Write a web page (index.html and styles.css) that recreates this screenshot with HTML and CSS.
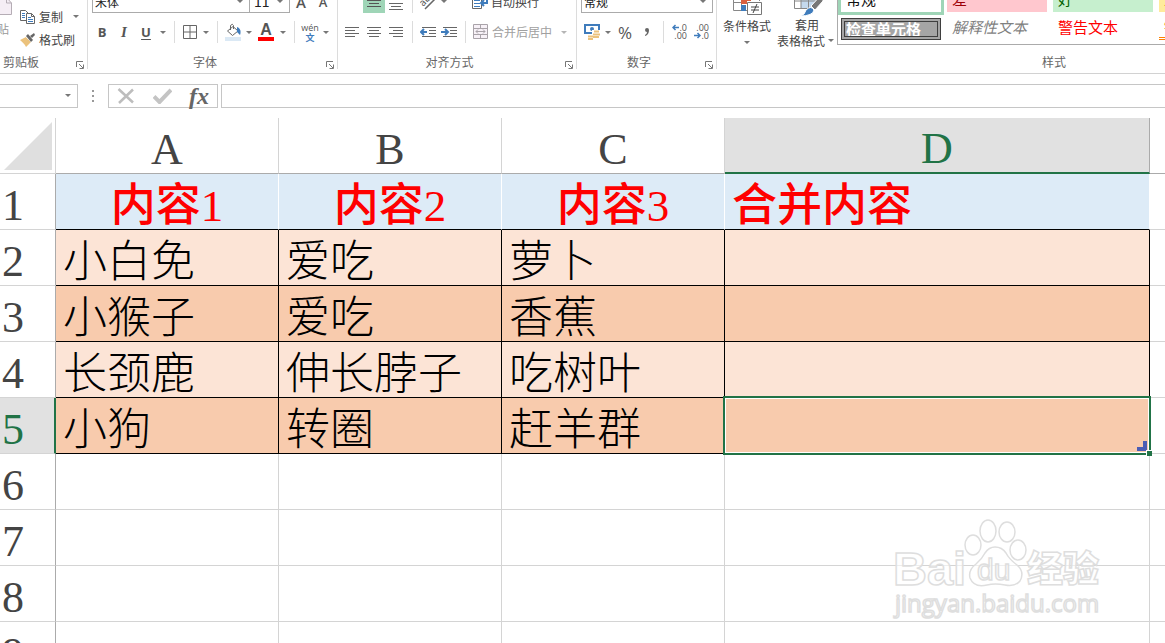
FILE: index.html
```html
<!DOCTYPE html>
<html lang="zh-CN">
<head>
<meta charset="utf-8">
<title>工作表</title>
<link rel="stylesheet" href="styles.css">
</head>
<body>
<div class="app">
<header class="ribbon">
  <section class="group clipboard">
    <div class="clip-body">
      <button class="paste"><svg width="12" height="18" viewBox="0 0 12 18"><path d="M-4 0.500H6.500L11.500 6V17.500H-4z" fill="#f5eef5" stroke="#b5adb5"/><path d="M6.500 0.500V6H11.500" fill="none" stroke="#b5adb5"/></svg><span>粘贴</span></button>
      <div class="clip-list">
        <button class="text-btn"><svg width="16" height="16" viewBox="0 0 16 16"><path d="M.5 1.500H5.500L8.500 4.500V11.500H.5z" fill="#fff" stroke="#666"/><path d="M2 4.500h3M2 6.500h3M2 8.500h3" stroke="#3f7cbc"/><path d="M6.500 4.500H11.500L14.500 7.500V14.500H6.500z" fill="#fff" stroke="#666"/><path d="M11.500 4.500V7.500H14.500" fill="none" stroke="#666"/><path d="M8 8.500h3M8 10.500h5M8 12.500h5" stroke="#3f7cbc"/></svg><span>复制</span><i class="arr gap-left"></i></button>
        <button class="text-btn"><svg width="16" height="16" viewBox="0 0 16 16"><path d="M0 8L6 5L11 10L6 15C5 12 2 10 0 8z" fill="#ebc27c"/><path d="M7 4L12 9" stroke="#fff" stroke-width="3"/><path d="M6 4L8 2L13 8L11 10z" fill="#666"/><path d="M10 4L14 1L15 3L12 6z" fill="#666"/></svg><span>格式刷</span></button>
      </div>
    </div>
    <div class="label-row"><span>剪贴板</span><button class="launch" aria-label="剪贴板设置"><svg width="8" height="8" viewBox="0 0 8 8"><path d="M.5 6V.5H7M3 3l4 4M7.500 3.500v4h-4" fill="none" stroke="#777"/></svg></button></div>
  </section>

  <section class="group font-group">
    <div class="row row-top">
      <span class="pick font-name"><select aria-label="字体"><option>宋体</option></select></span><span class="pick font-size"><select aria-label="字号"><option>11</option></select></span>
      <button class="btn wide big-a" aria-label="增大字号">A</button><button class="btn wide small-a" aria-label="减小字号">A</button>
    </div>
    <div class="row">
      <button class="btn wide b">B</button><button class="btn wide i">I</button><button class="btn wide u">U</button><i class="arr"></i><i class="sep"></i>
      <button class="btn" aria-label="边框"><svg width="14" height="14" viewBox="0 0 14 14"><path d="M.5.5h13v13H.5zM7 .5v13M.5 7h13" fill="none" stroke="#666"/></svg></button><i class="arr"></i><i class="sep"></i>
      <button class="btn" aria-label="填充颜色"><svg width="16" height="18" viewBox="0 0 16 18"><path d="M0 14h16v4H0z" fill="#dbe9f5"/><path d="M2.500 8L8 3.500L13 8L7.500 12.500z" fill="#fff" stroke="#666"/><path d="M5.500 7V2.500Q7.500 0 8.500 2.500V6" fill="none" stroke="#666"/><path d="M12 4Q17 6 15 12L12 9z" fill="#3f7cbc"/></svg></button><i class="arr"></i>
      <button class="btn wide font-color" aria-label="字体颜色"><span>A</span></button><i class="arr"></i><i class="sep"></i>
      <button class="btn phonetic"><span>wén</span><span class="wen">文</span></button><i class="arr"></i>
    </div>
    <div class="label-row"><span>字体</span><button class="launch" aria-label="字体设置"><svg width="8" height="8" viewBox="0 0 8 8"><path d="M.5 6V.5H7M3 3l4 4M7.500 3.500v4h-4" fill="none" stroke="#777"/></svg></button></div>
  </section>

  <section class="group align-group">
    <div class="row row-top">
      <button class="btn wide" aria-label="顶端对齐"></button><button class="btn wide pressed" aria-label="垂直居中"><svg width="14" height="14" viewBox="0 0 14 14"><path d="M0 5.500h14M2 8.500h10M0 11.500h14" stroke="#555"/></svg></button><button class="btn wide" aria-label="底端对齐"><svg width="14" height="18" viewBox="0 0 14 18"><path d="M0 10.500h14M2 13.500h10M0 16.500h14" stroke="#666"/></svg></button><i class="sep"></i>
      <button class="btn" aria-label="方向"><svg width="16" height="16" viewBox="0 0 16 16"><text x="0" y="10" font-size="10" fill="#555" transform="rotate(-45 5 8)">ab</text><path d="M5 15L15 5" stroke="#666" stroke-width="1.500"/></svg></button><i class="arr"></i>
      <button class="text-btn wrap-btn"><svg width="16" height="16" viewBox="0 0 16 16"><path d="M.5 1.500h9v13H.5z" fill="#fff" stroke="#666"/><path d="M2 9.500h6M2 12.500h6M2 6.500h6" stroke="#3f7cbc"/><path d="M15 4v5H10M12 6L9 9l3 3" fill="none" stroke="#3f7cbc" stroke-width="2"/></svg><span>自动换行</span></button>
    </div>
    <div class="row">
      <button class="btn wide" aria-label="左对齐"><svg width="14" height="10" viewBox="0 0 14 10"><path d="M0 .5h14M0 3.500h10M0 6.500h14M0 9.500h10" stroke="#666"/></svg></button><button class="btn wide" aria-label="居中"><svg width="14" height="10" viewBox="0 0 14 10"><path d="M0 .5h14M2 3.500h10M0 6.500h14M2 9.500h10" stroke="#666"/></svg></button><button class="btn wide" aria-label="右对齐"><svg width="14" height="10" viewBox="0 0 14 10"><path d="M0 .5h14M4 3.500h10M0 6.500h14M4 9.500h10" stroke="#666"/></svg></button><i class="sep"></i>
      <button class="btn" aria-label="减少缩进"><svg width="16" height="10" viewBox="0 0 16 10"><path d="M2 .5h14M9 3.500h7M9 6.500h7M2 9.500h14" stroke="#666"/><path d="M7 5H2M4 2L1 5l3 3" fill="none" stroke="#3f7cbc" stroke-width="2"/></svg></button><button class="btn wide" aria-label="增加缩进"><svg width="16" height="10" viewBox="0 0 16 10"><path d="M2 .5h14M9 3.500h7M9 6.500h7M2 9.500h14" stroke="#666"/><path d="M0 5h6M4 2l3 3L4 8" fill="none" stroke="#3f7cbc" stroke-width="2"/></svg></button><i class="sep"></i>
      <button class="text-btn merge" disabled><svg width="16" height="16" viewBox="0 0 16 16"><path d="M.5.5h14v14H.5z" fill="#f7f1f7" stroke="#a9a3a9"/><path d="M.5 4.500h14M.5 10.500h14M7.500.5v4M7.500 10.500v4M3 7.500h9M5 5.500l-2 2 2 2M10 5.500l2 2-2 2" fill="none" stroke="#a9a3a9"/></svg><span>合并后居中</span><i class="arr pale"></i></button>
    </div>
    <div class="label-row"><span>对齐方式</span><button class="launch" aria-label="对齐设置"><svg width="8" height="8" viewBox="0 0 8 8"><path d="M.5 6V.5H7M3 3l4 4M7.500 3.500v4h-4" fill="none" stroke="#777"/></svg></button></div>
  </section>

  <section class="group number-group">
    <div class="row row-top"><span class="pick format"><select aria-label="数字格式"><option>常规</option></select></span></div>
    <div class="row">
      <button class="btn" aria-label="会计数字格式"><svg width="16" height="16" viewBox="0 0 16 16"><path d="M1 1h14v8H1z" fill="#fff" stroke="#3f7cbc" stroke-width="2"/><circle cx="8" cy="5" r="2" fill="#3f7cbc"/><path d="M8 6h8v8H12v2H3v-5h5z" fill="#fff"/><path d="M10 7.500h5M9 10.500h7M9 13h6M4 12.500h5M4 15h5" stroke="#ebc27c" stroke-width="2"/></svg></button><i class="arr"></i>
      <button class="btn wide percent">%</button><button class="btn wide" aria-label="千位分隔"><svg width="6" height="10" viewBox="0 0 6 10"><path d="M3 1a2 2 0 1 0 0 4Q3 7 1 8V9Q5 8 5 3Q5 1 3 1z" fill="#666"/></svg></button><i class="sep"></i>
      <button class="btn wide decimals"><span><svg width="7" height="7" viewBox="0 0 7 7"><path d="M7 3.500H1M3.500 1L1 3.500 3.500 6" fill="none" stroke="#3f7cbc" stroke-width="1.500"/></svg>.0</span><span>.00</span></button>
      <button class="btn wide decimals"><span>.00</span><span><svg width="7" height="7" viewBox="0 0 7 7"><path d="M0 3.500h6M3.500 1L6 3.500 3.500 6" fill="none" stroke="#3f7cbc" stroke-width="1.500"/></svg>.0</span></button>
    </div>
    <div class="label-row"><span>数字</span><button class="launch" aria-label="数字设置"><svg width="8" height="8" viewBox="0 0 8 8"><path d="M.5 6V.5H7M3 3l4 4M7.500 3.500v4h-4" fill="none" stroke="#777"/></svg></button></div>
  </section>

  <section class="group styles-group">
    <div class="styles-body">
      <button class="tall"><svg width="32" height="32" viewBox="0 0 32 32"><path d="M2.500 2.500h26v25h-26zM2.500 11h26M2.500 19.500h26M10.500 2.500v25M19 2.500v25" fill="#fff" stroke="#888"/><path d="M10 11h10v10H10z" fill="#d9603f"/><path d="M10 22h5v6h-5z" fill="#3f7cbc"/><path d="M16 18h16v14H16z" fill="#fff"/><path d="M16.500 19.500h14v12h-14z" fill="#fff" stroke="#777"/><path d="M20 24h8M20 27h8M26 21l-4 9" stroke="#444"/></svg><span>条件格式</span><i class="arr"></i></button>
      <button class="tall"><svg width="32" height="32" viewBox="0 0 32 32"><path d="M3.500 2.500h22v22h-22z" fill="#fff" stroke="#888"/><path d="M10 9h15v15H10z" fill="#c4d9ee"/><path d="M3.500 9.500h22M3.500 17h22M10 2.500v22M17.500 2.500v22" stroke="#888" fill="none"/><path d="M32 9L20 22l4 4L32 17z" fill="#777" stroke="#fff"/><path d="M9 32Q14 31 15 26Q20 21 23 26Q22 32 9 32z" fill="#3f7cbc" stroke="#fff"/></svg><span>套用</span><span class="second">表格格式<i class="arr"></i></span></button>
      <div class="gallery">
        <button class="style chosen">常规</button><button class="style bad">差</button><button class="style good">好</button><button class="style neutral">适中</button>
        <button class="style check">检查单元格</button><button class="style explain">解释性文本</button><button class="style warn">警告文本</button><button class="style linked">链接单元格</button>
      </div>
    </div>
    <div class="label-row"><span>样式</span></div>
  </section>
</header>

<div class="formula-bar">
  <div class="name-box pick"><input aria-label="名称框"></div>
  <div class="dots"><svg width="3" height="13" viewBox="0 0 3 13"><path d="M0 0h2v2H0zM0 5h2v2H0zM0 10h2v2H0z" fill="#999"/></svg></div>
  <div class="fx-box">
    <button aria-label="取消"><svg width="18" height="16" viewBox="0 0 18 16"><path d="M1.500 1L16 14.500M16 1.500L2 15" stroke="#bdbdbd" stroke-width="2.500"/></svg></button>
    <button aria-label="输入"><svg width="19" height="16" viewBox="0 0 19 16"><path d="M1 8.500L6.500 14L18 2" fill="none" stroke="#c4c4c4" stroke-width="4"/></svg></button>
    <button class="fx">fx</button>
  </div>
  <input class="formula" aria-label="编辑栏">
</div>

<main class="sheet">
  <table>
    <colgroup><col class="c-head"><col class="c-std"><col class="c-std"><col class="c-std"><col class="c-wide"><col></colgroup>
    <thead><tr><th class="corner"><svg width="48" height="48" viewBox="0 0 48 48"><path d="M48 0V48H0z" fill="#dfdfdf"/></svg></th><th>A</th><th>B</th><th>C</th><th class="active">D</th><th></th></tr></thead>
    <tbody>
      <tr class="title"><th>1</th><td>内容1</td><td>内容2</td><td>内容3</td><td class="left">合并内容</td><td></td></tr>
      <tr class="data"><th>2</th><td>小白免</td><td>爱吃</td><td>萝卜</td><td></td><td></td></tr>
      <tr class="data dark"><th>3</th><td>小猴子</td><td>爱吃</td><td>香蕉</td><td></td><td></td></tr>
      <tr class="data"><th>4</th><td>长颈鹿</td><td>伸长脖子</td><td>吃树叶</td><td></td><td></td></tr>
      <tr class="data dark"><th class="active">5</th><td>小狗</td><td>转圈</td><td>赶羊群</td><td class="selected"><div class="cursor"><svg class="corner-mark" width="10" height="10" viewBox="0 0 10 10"><path d="M6 0h4v10H0V6h6z" fill="#4a5db5"/></svg><i class="handle"></i></div></td><td></td></tr>
      <tr><th>6</th><td></td><td></td><td></td><td></td><td></td></tr>
      <tr><th>7</th><td></td><td></td><td></td><td></td><td></td></tr>
      <tr><th>8</th><td></td><td></td><td></td><td></td><td></td></tr>
      <tr><th>9</th><td></td><td></td><td></td><td></td><td></td></tr>
    </tbody>
  </table>
  <svg class="watermark" width="216" height="106" viewBox="0 0 216 106">
    <g fill="#fff" fill-opacity=".6" stroke="#dedede" stroke-width="1.500">
      <text class="wm-bold" x="3" y="69" font-size="47">Bai</text>
      <ellipse cx="83" cy="29" rx="8" ry="10"/><ellipse cx="98" cy="15" rx="8" ry="11"/><ellipse cx="117" cy="16" rx="8" ry="10"/><ellipse cx="128" cy="34" rx="8" ry="10"/>
      <path d="M105 31Q112 31 116 37Q119 43 127 49Q135 56 130 65Q125 71 115 69Q105 67 97 69Q84 72 80 62Q78 54 86 48Q92 43 95 37Q99 31 105 31z"/>
      <text class="wm-round" x="87" y="64" font-size="30">du</text>
      <text class="wm-cjk" x="137" y="66" font-size="36">经验</text>
      <text class="wm-url" x="5" y="96" font-size="24">jingyan.baidu.com</text>
    </g>
  </svg>
</main>
</div>
</body>
</html>
```

FILE: styles.css
```css
* { box-sizing: border-box; }
body { margin: 0; background: #fff; color: #444; font: 12px/16px "Noto Sans CJK SC", sans-serif; }
button, select, input { font: inherit; color: inherit; margin: 0; padding: 0; border: 0; background: none; border-radius: 0; }
svg { display: block; flex: none; }
.app { height: 100vh; overflow: hidden; display: flex; flex-direction: column; }

/* Ribbon: anchored to its bottom edge */
.ribbon { display: flex; align-items: flex-end; flex: none; height: 74px; border-bottom: 1px solid #d2d2d2; overflow: hidden; }
.group { flex: none; position: relative; padding-bottom: 3px; }
.group:not(.styles-group)::after { content: ""; position: absolute; right: 0; top: 0; bottom: 4px; width: 1px; background: #dcdcdc; }
.clipboard { width: 88px; }
.font-group { width: 250px; }
.align-group { width: 239px; }
.number-group { width: 140px; }
.styles-group { width: 682px; }
.row { display: flex; align-items: center; height: 24px; padding-left: 3px; margin-bottom: 10px; }
.row-top { height: 23px; margin-bottom: 7px; }
.number-group .row { padding-left: 5px; }
.number-group .row-top { padding-left: 4px; }
.label-row { display: flex; align-items: center; height: 16px; padding-right: 4px; color: #666; }
.label-row span { flex: 1; text-align: center; padding-right: 4px; }
.clipboard .label-row span { text-align: left; padding-left: 3px; }
.launch { padding-top: 6px; }

.btn { width: 20px; height: 22px; flex: none; display: flex; align-items: center; justify-content: center; color: #555; }
.wide { width: 22px; }
.text-btn { display: flex; align-items: center; gap: 3px; height: 23px; white-space: nowrap; }
.arr { width: 12px; flex: none; display: flex; justify-content: center; }
.arr::before { content: ""; border: 3px solid transparent; border-top: 3px solid #777; border-bottom: 0; }
.arr.pale::before { border-top-color: #b5b5b5; }
.gap-left { margin-left: 4px; }
.sep { width: 11px; height: 22px; flex: none; background: linear-gradient(#dcdcdc, #dcdcdc) center / 1px 100% no-repeat; }

.clip-body { display: flex; align-items: flex-end; margin-bottom: 3px; }
.paste { width: 20px; height: 40px; margin-bottom: 14px; overflow: hidden; display: flex; flex-direction: column; align-items: flex-start; justify-content: space-between; color: #999; }
.paste span { align-self: flex-start; direction: rtl; width: 9px; white-space: nowrap; overflow: hidden; }

.pick { position: relative; display: block; height: 23px; border: 1px solid #ababab; }
.pick::after { content: ""; position: absolute; right: 6px; top: 9px; border: 3px solid transparent; border-top: 3px solid #777; border-bottom: 0; pointer-events: none; }
.pick select { appearance: none; width: 100%; height: 21px; padding-left: 2px; color: #222; background: #fff; display: block; line-height: 19px; }
.font-name { width: 158px; margin-left: 1px; }
.font-size { width: 41px; margin-left: -1px; }
.font-size select { font-size: 14px; padding-left: 4px; }
.format { width: 132px; }
.big-a { font: 600 15px "Open Sans", sans-serif; }
.small-a { font: 600 13px "Open Sans", sans-serif; }
.b { font: bold 13px "Open Sans", sans-serif; }
.i { font: italic bold 15px "Liberation Serif", serif; }
.u { font: bold 13px "Open Sans", sans-serif; text-decoration: underline; text-underline-offset: 2px; }
.font-color { padding: 0 3px; }
.font-color span { width: 16px; height: 18px; border-bottom: 4px solid #f00; font: bold 16px/14px "Liberation Sans", sans-serif; }
.phonetic { flex-direction: column; font: 9px/10px "Open Sans", sans-serif; }
.wen { color: #3f7cbc; font: bold 9px/9px "Noto Sans CJK SC", sans-serif; }
.pressed { background: #9fd5b7; height: 23px; }
.wrap-btn { margin-left: 22px; }
.merge { padding-left: 2px; color: #a0a0a0; }
.merge .arr { margin-left: 3px; }
.percent { font: 17px "Open Sans", sans-serif; }
.decimals { flex-direction: column; align-items: flex-end; padding-right: 4px; font: 9px/8px "Open Sans", sans-serif; }
.decimals span { display: flex; }

/* Style gallery */
.styles-body { display: flex; align-items: flex-end; margin-bottom: 6px; }
.tall { width: 60px; height: 65px; flex: none; display: flex; flex-direction: column; align-items: center; line-height: 15px; white-space: nowrap; justify-content: space-between; }
.tall > .arr { height: 12px; align-items: center; }
.tall .second { display: flex; align-items: center; }
.tall + .tall { height: 64px; }
.gallery { display: grid; grid-template-columns: repeat(5, 100px); grid-auto-rows: 22px; gap: 6px; padding: 4px 3px; margin-bottom: 3px; border: 1px solid #ababab; width: 554px; flex: none; overflow: hidden; }
.style { text-align: left; display: flex; align-items: flex-start; padding-left: 5px; font-size: 15px; line-height: 18px; white-space: nowrap; color: #111; overflow: hidden; }
.chosen { box-shadow: 0 0 0 3px #9fd5b7; }
.bad { background: #ffc7ce; color: #9c0006; }
.good { background: #c6efce; color: #006100; }
.neutral { background: #ffeb9c; color: #9c6500; }
.check { grid-column: 1; background: #a5a5a5; color: #fff; font-weight: bold; border: 4px double #3f3f3f; line-height: 14px; padding-left: 1px; }
.explain { grid-column: 2; color: #7f7f7f; font-style: italic; }
.warn { color: #f00; }
.linked { color: #fa7d00; border-bottom: 3px double #ff8001; }

/* Formula bar */
.formula-bar { display: flex; flex: none; height: 44px; padding: 10px 0; align-items: stretch; }
.formula-bar .pick, .fx-box, .formula { border: 1px solid #c6c6c6; height: 24px; }
.formula-bar .name-box { width: 78px; border-left: 0; }
.name-box input { width: 60px; height: 22px; }
.dots { width: 30px; display: flex; align-items: center; justify-content: center; }
.fx-box { width: 110px; display: flex; align-items: center; justify-content: space-between; padding: 0 8px; }
.fx { font: italic bold 24px/20px "Liberation Serif", serif; color: #666; }
.formula { flex: 1; min-width: 0; margin-left: 3px; border-right: 0; padding: 0 6px; }

/* Sheet */
.sheet { flex: 1; min-height: 0; overflow: hidden; position: relative; }
table { width: 100%; table-layout: fixed; border-collapse: separate; border-spacing: 0; }
.c-head { width: 56px; }
.c-std { width: 223px; }
.c-wide { width: 425px; }
th, td { height: 56px; padding: 0; border: 0 solid #d4d4d4; border-width: 0 1px 1px 0; white-space: nowrap; }
th { padding-top: 8px; font: 44px/46px "Liberation Serif", serif; }
td { padding: 9px 0 0 7px; color: #000; font: 300 44px/45px "Liberation Serif", "Noto Sans CJK SC", serif; }
thead th { border-bottom-color: #ababab; color: #444; }
thead .corner { padding: 0; border-bottom-color: #d4d4d4; border-right-color: #d4d4d4; }
.corner svg { margin-left: 4px; }
tbody th { border-right-color: #ababab; text-align: left; padding-left: 2px; }
thead .active { background: #e1e1e1; color: #217346; border-bottom: 2px solid #217346; border-right-color: #ababab; }
tbody .active { background: #e1e1e1; color: #217346; border-right: 2px solid #217346; }
tr > :last-child { border-right: 0; }
.title td { background: #ddebf7; border-right-color: #fff; border-bottom-color: #000; color: #f00; font-size: 45px; font-weight: 500; text-align: center; padding-left: 0; }
.title td.left { text-align: left; padding-left: 7px; }
.data td { background: #fce4d6; border-color: #000; }
.data.dark td { background: #f8cbad; }
tr.title td:last-child, tr.data td:last-child { background: #fff; border-color: #d4d4d4; }
.selected { position: relative; }
.cursor { position: absolute; inset: -2px; border: 2px solid #217346; box-shadow: inset 0 0 0 1px #fff; }
.corner-mark { position: absolute; right: 2px; bottom: 2px; }
.handle { position: absolute; right: -3px; bottom: -3px; width: 6px; height: 6px; background: #217346; border: solid #fff; border-width: 1px 0 0 1px; }
.watermark { position: absolute; right: 59px; bottom: 21px; }
.wm-bold { font-family: "Liberation Sans", sans-serif; font-weight: bold; }
.wm-round { font-family: "Liberation Sans", sans-serif; }
.wm-cjk { font-family: "Noto Sans CJK SC", sans-serif; font-weight: 900; }
.wm-url { font-family: "Open Sans", sans-serif; }
```
